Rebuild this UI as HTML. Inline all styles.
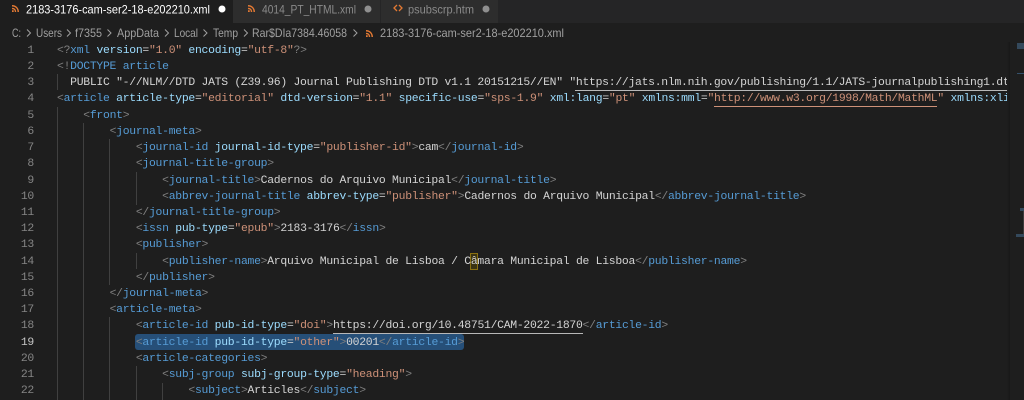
<!DOCTYPE html>
<html><head><meta charset="utf-8">
<style>
html,body{margin:0;padding:0;width:1024px;height:400px;overflow:hidden;background:#1e1e1e}
.abs{position:absolute}
#code{position:absolute;left:0;top:0;width:1009px;height:400px;overflow:hidden}
.l{position:absolute;left:57px;margin-top:1px;height:16px;white-space:pre;font:11.4px/16px "Liberation Mono",monospace;letter-spacing:-.267px;color:#d4d4d4;filter:blur(.2px)}
.n{position:absolute;width:34px;left:0;margin-top:1px;text-align:right;height:16px;font:11.4px/16px "Liberation Mono",monospace;letter-spacing:-.267px;color:#858585;filter:blur(.2px)}
.g{position:absolute;width:1px;background:#404040}
i{font-style:normal}
.b{color:#808080}.t{color:#569cd6}.a{color:#9cdcfe}.s{color:#ce9178}
.u{position:absolute;height:1px}
</style></head><body>
<svg class="abs" style="left:0;top:0" width="1024" height="42" font-family="'Liberation Sans',sans-serif" font-size="12">
<rect width="1024" height="23" fill="#252526"/>
<rect width="1024" height="19" y="23" fill="#1e1e1e"/>
<rect x="0" width="233" height="23" fill="#1e1e1e"/>
<rect x="233" width="147" height="23" fill="#2d2d2d"/>
<rect x="380" width="1" height="23" fill="#252526"/>
<rect x="381" width="117" height="23" fill="#2d2d2d"/>
<g fill="#e37933">
<path transform="translate(12,5)" d="M0 0c4 0 7 3 7 7H5.500C5.500 3.500 3.500 1.500 0 1.500zM0 2.800c2.500 0 4.200 1.700 4.200 4.200H2.800C2.800 5 2 4.200 0 4.200zM0 5.300h1.700V7H0z"/>
<path transform="translate(248,5)" d="M0 0c4 0 7 3 7 7H5.500C5.500 3.500 3.500 1.500 0 1.500zM0 2.800c2.500 0 4.200 1.700 4.200 4.200H2.800C2.800 5 2 4.200 0 4.200zM0 5.300h1.700V7H0z"/>
<path transform="translate(366,30)" d="M0 0c4 0 7 3 7 7H5.500C5.500 3.500 3.500 1.500 0 1.500zM0 2.800c2.500 0 4.200 1.700 4.200 4.200H2.800C2.800 5 2 4.200 0 4.200zM0 5.300h1.700V7H0z"/>
</g>
<path d="M397 5L394 8L397 11M399 5L402 8L399 11" fill="none" stroke="#e37933" stroke-width="1.300"/>
<text x="26" y="13.500" fill="#ffffff" textLength="184" lengthAdjust="spacingAndGlyphs">2183-3176-cam-ser2-18-e202210.xml</text>
<circle cx="222" cy="9" r="3.500" fill="#ffffff"/>
<text x="262" y="13.500" fill="#8a8a8a" textLength="94" lengthAdjust="spacingAndGlyphs">4014_PT_HTML.xml</text>
<circle cx="368" cy="9" r="3.500" fill="#8f8f8f"/>
<text x="408" y="13.500" fill="#8a8a8a" textLength="66" lengthAdjust="spacingAndGlyphs">psubscrp.htm</text>
<circle cx="486" cy="9" r="3.500" fill="#8f8f8f"/>
<g fill="#a0a0a0">
<text x="12" y="37" textLength="9" lengthAdjust="spacingAndGlyphs">C:</text>
<text x="36" y="37" textLength="26" lengthAdjust="spacingAndGlyphs">Users</text>
<text x="75" y="37" textLength="27" lengthAdjust="spacingAndGlyphs">f7355</text>
<text x="117" y="37" textLength="42" lengthAdjust="spacingAndGlyphs">AppData</text>
<text x="174" y="37" textLength="24" lengthAdjust="spacingAndGlyphs">Local</text>
<text x="213" y="37" textLength="25" lengthAdjust="spacingAndGlyphs">Temp</text>
<text x="252" y="37" textLength="95" lengthAdjust="spacingAndGlyphs">Rar$DIa7384.46058</text>
<text x="380" y="37" textLength="184" lengthAdjust="spacingAndGlyphs">2183-3176-cam-ser2-18-e202210.xml</text>
</g>
<g fill="none" stroke="#a0a0a0" stroke-width="1">
<path d="M27 29.500l3.500 3.500-3.500 3.500M67 29.500l3.500 3.500-3.500 3.500M107.500 29.500l3.500 3.500-3.500 3.500M165 29.500l3.500 3.500-3.500 3.500M203.500 29.500l3.500 3.500-3.500 3.500M244 29.500l3.500 3.500-3.500 3.500M353.500 29.500l3.500 3.500-3.500 3.500"/>
</g>
</svg>

<div id="code">
<div class="abs" style="left:135px;top:334px;width:329px;height:16px;background:#264f78;border-radius:3px"></div>
<div class="abs" style="left:470px;top:253px;width:6px;height:15px;background:#3a3312;border:1px solid #8a7010"></div>

<div class="g" style="left:57px;top:74px;height:16px"></div>
<div class="g" style="left:57px;top:107px;height:293px"></div>
<div class="g" style="left:83px;top:123px;height:277px"></div>
<div class="g" style="left:109px;top:139px;height:146px"></div>
<div class="g" style="left:109px;top:317px;height:83px"></div>
<div class="g" style="left:136px;top:172px;height:33px"></div>
<div class="g" style="left:136px;top:253px;height:16px"></div>
<div class="g" style="left:136px;top:366px;height:34px"></div>
<div class="g" style="left:162px;top:383px;height:17px"></div>

<div class="u" style="left:575px;top:90px;width:434px;background:#b8b8b8"></div>
<div class="u" style="left:714px;top:106px;width:223px;background:#ce9178"></div>
<div class="u" style="left:333px;top:333px;width:250px;background:#b8b8b8"></div>

<div class="n" style="top:42px">1</div><div class="n" style="top:58px">2</div><div class="n" style="top:74px">3</div><div class="n" style="top:90px">4</div><div class="n" style="top:107px">5</div><div class="n" style="top:123px">6</div><div class="n" style="top:139px">7</div><div class="n" style="top:155px">8</div><div class="n" style="top:172px">9</div><div class="n" style="top:188px">10</div><div class="n" style="top:204px">11</div><div class="n" style="top:220px">12</div><div class="n" style="top:236px">13</div><div class="n" style="top:253px">14</div><div class="n" style="top:269px">15</div><div class="n" style="top:285px">16</div><div class="n" style="top:301px">17</div><div class="n" style="top:317px">18</div><div class="n" style="top:334px;color:#c6c6c6">19</div><div class="n" style="top:350px">20</div><div class="n" style="top:366px">21</div><div class="n" style="top:382px">22</div>

<div class="l" style="top:42px"><i class="b">&lt;?</i><i class="t">xml</i> <i class="a">version</i>=<i class="s">"1.0"</i> <i class="a">encoding</i>=<i class="s">"utf-8"</i><i class="b">?&gt;</i></div>
<div class="l" style="top:58px"><i class="b">&lt;!</i><i class="t">DOCTYPE</i> <i class="t">article</i></div>
<div class="l" style="top:74px">  PUBLIC "-//NLM//DTD JATS (Z39.96) Journal Publishing DTD v1.1 20151215//EN" "https://jats.nlm.nih.gov/publishing/1.1/JATS-journalpublishing1.dtd"</div>
<div class="l" style="top:90px"><i class="b">&lt;</i><i class="t">article</i> <i class="a">article-type</i>=<i class="s">"editorial"</i> <i class="a">dtd-version</i>=<i class="s">"1.1"</i> <i class="a">specific-use</i>=<i class="s">"sps-1.9"</i> <i class="a">xml:lang</i>=<i class="s">"pt"</i> <i class="a">xmlns:mml</i>=<i class="s">"http://www.w3.org/1998/Math/MathML"</i> <i class="a">xmlns:xlink</i></div>
<div class="l" style="top:107px">    <i class="b">&lt;</i><i class="t">front</i><i class="b">&gt;</i></div>
<div class="l" style="top:123px">        <i class="b">&lt;</i><i class="t">journal-meta</i><i class="b">&gt;</i></div>
<div class="l" style="top:139px">            <i class="b">&lt;</i><i class="t">journal-id</i> <i class="a">journal-id-type</i>=<i class="s">"publisher-id"</i><i class="b">&gt;</i>cam<i class="b">&lt;/</i><i class="t">journal-id</i><i class="b">&gt;</i></div>
<div class="l" style="top:155px">            <i class="b">&lt;</i><i class="t">journal-title-group</i><i class="b">&gt;</i></div>
<div class="l" style="top:172px">                <i class="b">&lt;</i><i class="t">journal-title</i><i class="b">&gt;</i>Cadernos do Arquivo Municipal<i class="b">&lt;/</i><i class="t">journal-title</i><i class="b">&gt;</i></div>
<div class="l" style="top:188px">                <i class="b">&lt;</i><i class="t">abbrev-journal-title</i> <i class="a">abbrev-type</i>=<i class="s">"publisher"</i><i class="b">&gt;</i>Cadernos do Arquivo Municipal<i class="b">&lt;/</i><i class="t">abbrev-journal-title</i><i class="b">&gt;</i></div>
<div class="l" style="top:204px">            <i class="b">&lt;/</i><i class="t">journal-title-group</i><i class="b">&gt;</i></div>
<div class="l" style="top:220px">            <i class="b">&lt;</i><i class="t">issn</i> <i class="a">pub-type</i>=<i class="s">"epub"</i><i class="b">&gt;</i>2183-3176<i class="b">&lt;/</i><i class="t">issn</i><i class="b">&gt;</i></div>
<div class="l" style="top:236px">            <i class="b">&lt;</i><i class="t">publisher</i><i class="b">&gt;</i></div>
<div class="l" style="top:253px">                <i class="b">&lt;</i><i class="t">publisher-name</i><i class="b">&gt;</i>Arquivo Municipal de Lisboa / Câmara Municipal de Lisboa<i class="b">&lt;/</i><i class="t">publisher-name</i><i class="b">&gt;</i></div>
<div class="l" style="top:269px">            <i class="b">&lt;/</i><i class="t">publisher</i><i class="b">&gt;</i></div>
<div class="l" style="top:285px">        <i class="b">&lt;/</i><i class="t">journal-meta</i><i class="b">&gt;</i></div>
<div class="l" style="top:301px">        <i class="b">&lt;</i><i class="t">article-meta</i><i class="b">&gt;</i></div>
<div class="l" style="top:317px">            <i class="b">&lt;</i><i class="t">article-id</i> <i class="a">pub-id-type</i>=<i class="s">"doi"</i><i class="b">&gt;</i>https://doi.org/10.48751/CAM-2022-1870<i class="b">&lt;/</i><i class="t">article-id</i><i class="b">&gt;</i></div>
<div class="l" style="top:334px">            <i class="b">&lt;</i><i class="t">article-id</i> <i class="a">pub-id-type</i>=<i class="s">"other"</i><i class="b">&gt;</i>00201<i class="b">&lt;/</i><i class="t">article-id</i><i class="b">&gt;</i></div>
<div class="l" style="top:350px">            <i class="b">&lt;</i><i class="t">article-categories</i><i class="b">&gt;</i></div>
<div class="l" style="top:366px">                <i class="b">&lt;</i><i class="t">subj-group</i> <i class="a">subj-group-type</i>=<i class="s">"heading"</i><i class="b">&gt;</i></div>
<div class="l" style="top:382px">                    <i class="b">&lt;</i><i class="t">subject</i><i class="b">&gt;</i>Articles<i class="b">&lt;/</i><i class="t">subject</i><i class="b">&gt;</i></div>
</div>

<div class="abs" style="left:1007px;top:42px;width:3px;height:358px;background:linear-gradient(90deg,#1e1e1e,#181818)"></div>
<div class="abs" style="left:1010px;top:42px;width:14px;height:358px;background:#1e1e1e"></div>
<div class="abs" style="left:1017px;top:43px;width:7px;height:6px;background:#34495c"></div>
<div class="abs" style="left:1017px;top:73px;width:7px;height:1px;background:#34506a"></div>
<div class="abs" style="left:1020px;top:208px;width:4px;height:3px;background:#34495c"></div>
<div class="abs" style="left:1023px;top:211px;width:1px;height:23px;background:#3c3c3c"></div>
<div class="abs" style="left:1016px;top:234px;width:8px;height:3px;background:#34495c"></div>
</body></html>
